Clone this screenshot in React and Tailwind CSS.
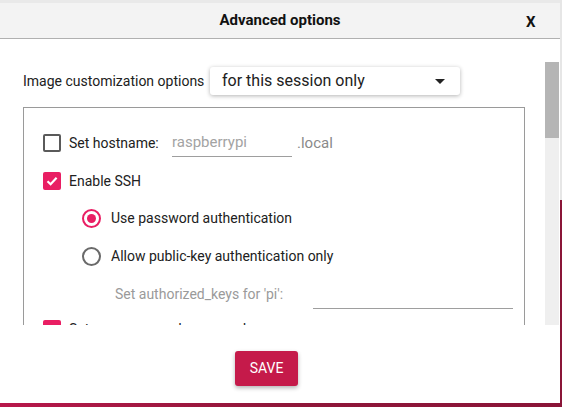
import React from "react";

function Checkbox({ checked }) {
  if (checked) {
    return (
      <div className="w-[18px] h-[18px] rounded-[2px] bg-[#e91e63] flex items-center justify-center shrink-0">
        <svg width="14" height="14" viewBox="0 0 14 14">
          <path d="M2.5 7.2 L5.6 10.2 L11.6 3.8" fill="none" stroke="white" strokeWidth="2.2" />
        </svg>
      </div>
    );
  }
  return <div className="w-[18px] h-[18px] rounded-[2px] border-2 border-[#5a5a5a] shrink-0" />;
}

function Radio({ checked }) {
  if (checked) {
    return (
      <div className="w-[19px] h-[19px] rounded-full border-2 border-[#e91e63] flex items-center justify-center shrink-0">
        <div className="w-[9px] h-[9px] rounded-full bg-[#e91e63]" />
      </div>
    );
  }
  return <div className="w-[19px] h-[19px] rounded-full border-2 border-[#6a6a6a] shrink-0" />;
}

export default function App() {
  return (
    <div className="w-[562px] h-[407px] overflow-hidden bg-gradient-to-r from-[#b8184b] via-[#8f1639] to-[#8a1538] font-['Roboto',sans-serif] flex">
      <div className="w-[560px] h-[403px] bg-white flex flex-col shrink-0">
        <div className="h-[3px] bg-[#e9e9e9] shrink-0" />
        <div className="h-[36px] shrink-0 bg-[#f3f3f3] border-b border-[#b0b0b0] relative flex items-center justify-center">
          <span className="text-[15px] font-bold text-[#111]">Advanced options</span>
          <span className="absolute left-[526px] top-[8px] text-[15px] font-bold text-[#111]">X</span>
        </div>
        <div className="h-[23px] shrink-0" />
        <div className="flex h-[263px] shrink-0">
          <div className="w-[545px] overflow-hidden pl-[23px] pr-[20px] pt-[5px] text-[14px] text-[#212121]">
            <div className="flex items-center h-[28px]">
              <span className="w-[187px] shrink-0">Image customization options</span>
              <div className="w-[250px] h-[28px] rounded-[3px] bg-white shadow-[0_1px_4px_rgba(0,0,0,0.3)] flex items-center pl-[12px] pr-[15px]">
                <span className="flex-1 text-[16px] text-[#212121]">for this session only</span>
                <svg width="10" height="5" viewBox="0 0 10 5">
                  <path d="M0 0 L10 0 L5 5 Z" fill="#222" />
                </svg>
              </div>
            </div>
            <div className="mt-[12px] border border-[#9a9a9a] pt-[16px] pl-[19px] h-[400px]">
              <div className="h-[38px] flex items-center">
                <Checkbox />
                <span className="ml-[8px] w-[103px]">Set hostname:</span>
                <div className="w-[120px] h-[28px] border-b border-[#9e9e9e] flex items-center text-[#a3a3a3] text-[15px]">raspberrypi</div>
                <span className="ml-[5px] text-[#8a8a8a] text-[15px]">.local</span>
              </div>
              <div className="h-[38px] flex items-center">
                <Checkbox checked />
                <span className="ml-[8px]">Enable SSH</span>
              </div>
              <div className="h-[37px] flex items-center pl-[39px]">
                <Radio checked />
                <span className="ml-[10px]">Use password authentication</span>
              </div>
              <div className="h-[38px] flex items-center pl-[39px]">
                <Radio />
                <span className="ml-[10px]">Allow public-key authentication only</span>
              </div>
              <div className="h-[37px] flex items-center pl-[72px] pt-[2px]">
                <span className="w-[198px] text-[#9a9a9a]">Set authorized_keys for 'pi':</span>
                <div className="w-[200px] h-[28px] border-b border-[#9e9e9e]" />
              </div>
              <div className="h-[34px] flex items-center">
                <Checkbox checked />
                <span className="ml-[8px]">Set username and password</span>
              </div>
            </div>
          </div>
          <div className="w-[14px] bg-[#efefef] shrink-0">
            <div className="h-[76px] bg-[#b5b5b5]" />
          </div>
        </div>
        <div className="flex-1 flex items-start justify-center pt-[26px] pr-[27px]">
          <button className="w-[63px] h-[35px] rounded-[3px] bg-[#c51a4a] text-white text-[14px] shadow-[0_2px_4px_rgba(0,0,0,0.3)]">
            SAVE
          </button>
        </div>
      </div>
      <div className="w-[2px] flex flex-col">
        <div className="h-[200px] bg-[#e6e6e6]" />
      </div>
    </div>
  );
}
